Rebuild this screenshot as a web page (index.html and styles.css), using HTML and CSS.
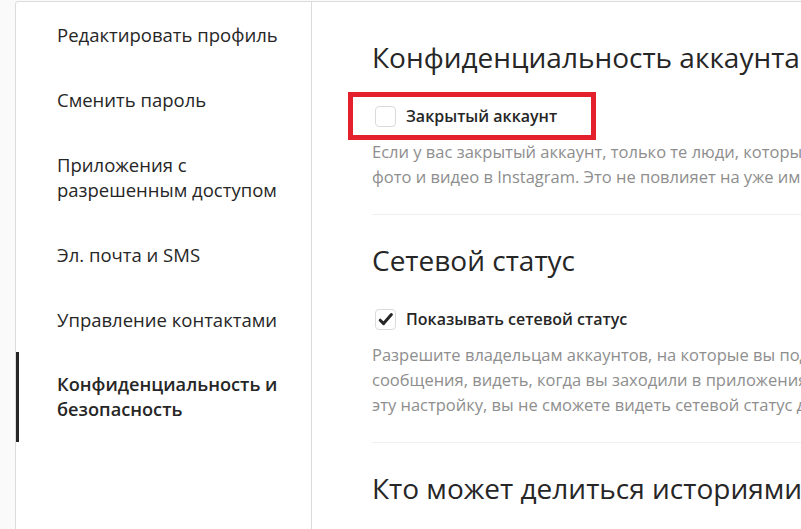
FILE: index.html
```html
<!DOCTYPE html>
<html lang="ru">
<head>
<meta charset="utf-8">
<title>Конфиденциальность и безопасность</title>
<link rel="stylesheet" href="styles.css">
</head>
<body>
<div class="card">
  <nav class="sidebar">
    <a class="nav-item">Редактировать профиль</a>
    <a class="nav-item">Сменить пароль</a>
    <a class="nav-item">Приложения с<br>разрешенным доступом</a>
    <a class="nav-item">Эл. почта и SMS</a>
    <a class="nav-item">Управление контактами</a>
    <a class="nav-item active">Конфиденциальность и<br>безопасность</a>
  </nav>
  <main class="content">
    <section class="section">
      <h2 class="section-title">Конфиденциальность аккаунта</h2>
      <label class="check-row">
        <span class="checkbox"></span>
        <span class="check-label">Закрытый аккаунт</span>
        <span class="highlight"></span>
      </label>
      <p class="desc">Если у вас закрытый аккаунт, только те люди, которых вы одобрите, смогут видеть ваши<br>фото и видео в Instagram. Это не повлияет на уже имеющихся подписчиков.</p>
    </section>
    <section class="section">
      <h2 class="section-title">Сетевой статус</h2>
      <label class="check-row">
        <span class="checkbox checked"><svg viewBox="0 0 21 21" width="21" height="21"><path d="M5.2 11.2 L8.6 14.6 L16.4 5.6" fill="none" stroke="#262626" stroke-width="3" stroke-linecap="round" stroke-linejoin="round"/></svg></span>
        <span class="check-label">Показывать сетевой статус</span>
      </label>
      <p class="desc">Разрешите владельцам аккаунтов, на которые вы подписаны, и людям, которым вы отправляли<br>сообщения, видеть, когда вы заходили в приложения Instagram в последний раз. Если вы отключите<br>эту настройку, вы не сможете видеть сетевой статус других аккаунтов.</p>
    </section>
    <section class="section last">
      <h2 class="section-title">Кто может делиться историями</h2>
    </section>
  </main>
</div>
</body>
</html>
```
FILE: styles.css
```css
html, body {
  margin: 0;
  padding: 0;
  overflow: hidden;
  background: #fafafa;
}

body {
  padding: 1px 0 0 15px;
  font-family: "Open Sans", "Noto Sans", "Liberation Sans", sans-serif;
  color: #262626;
}

.card {
  display: flex;
  width: 1300px;
  height: 700px;
  background: #fff;
  border: 1px solid #dbdbdb;
  border-radius: 3px;
}

.sidebar {
  width: 295px;
  flex: none;
  border-right: 1px solid #dbdbdb;
  padding-top: 0;
  display: flex;
  flex-direction: column;
}

.nav-item {
  display: block;
  border-left: 3px solid transparent;
  padding: 20px 20px 20px 38px;
  font-size: 18.5px;
  line-height: 25px;
  color: #262626;
}

.nav-item.active {
  border-left-color: #262626;
  font-weight: 600;
  font-size: 18.2px;
}

.content {
  flex: 1;
  padding: 38px 0 0 60px;
}

.section {
  border-bottom: 1px solid #efefef;
  padding-bottom: 25px;
  margin-bottom: 28px;
  width: 900px;
}

.section.last {
  border-bottom: none;
}

.section-title {
  margin: 0 0 26px;
  font-size: 28px;
  font-weight: 400;
  line-height: 35px;
  white-space: nowrap;
}

.check-row {
  position: relative;
  display: flex;
  align-items: center;
  height: 30px;
  padding-left: 3px;
}

.checkbox {
  width: 21px;
  height: 21px;
  box-sizing: border-box;
  border: 1px solid #dbdbdb;
  border-radius: 4px;
  margin-right: 10px;
  display: flex;
  align-items: center;
  justify-content: center;
  overflow: hidden;
}

.checkbox svg {
  flex: none;
}

.check-label {
  font-size: 16px;
  font-weight: 600;
  line-height: 25px;
}

.highlight {
  position: absolute;
  left: -24px;
  top: -9px;
  width: 248px;
  height: 48px;
  box-sizing: border-box;
  border: 5px solid #e3202b;
}

.desc {
  margin: 8px 0 0;
  font-size: 16.5px;
  line-height: 25px;
  color: #8e8e8e;
  white-space: nowrap;
}
```
